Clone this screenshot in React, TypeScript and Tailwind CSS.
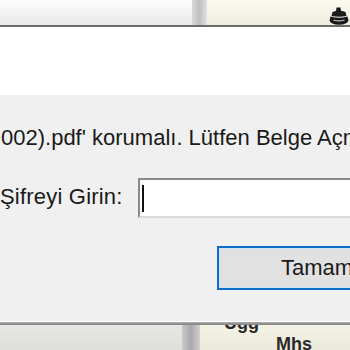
export default function App() {
  return (
    <div
      className="w-[350px] h-[350px] overflow-hidden flex flex-col bg-[#f0f0f0] text-[#1a1a1a]"
      style={{ fontFamily: '"Liberation Sans", Arial, sans-serif' }}
    >
      {/* application behind the dialog, top edge */}
      <div className="h-[25px] flex shrink-0">
        <div className="w-[192px] bg-gradient-to-b from-[#fdfdfd] to-[#e8e8e8]" />
        <div className="w-[15px] bg-gradient-to-r from-[#d8d8d8] via-[#bfbfbf] to-[#e2e2e0]" />
        <div className="flex-1 bg-gradient-to-b from-[#fbfaf1] to-[#efeddd] flex items-end justify-end pr-[1px]">
          <svg width="20" height="18" viewBox="0 0 20 18">
            <path d="M7.5 0.5 L11.5 0.5 L12 4.5 L9.5 6.5 L7 4.5 Z" fill="#151515" />
            <path d="M3.5 5 Q10 2.5 16.5 5 L17.5 9 Q10 10.5 2.5 9 Z" fill="#1b1b1b" />
            <path d="M1.5 9.5 Q10 12 18.5 9.5 L19.5 13.5 Q18.5 17.5 10 17.8 Q1.5 17.5 0.5 13.5 Z" fill="#181818" />
            <path d="M4.5 13 Q10 14.8 15.5 13" stroke="#c4c4c4" strokeWidth="1.2" fill="none" />
          </svg>
        </div>
      </div>

      {/* dialog */}
      <div className="h-[2px] shrink-0 bg-[#6a6a6a]" />
      <div className="h-[68px] shrink-0 bg-white" />
      <div className="flex-1 flex flex-col bg-[#f0f0f0] text-[22px] leading-[24px] whitespace-nowrap">
        <div className="mt-[31px] ml-[1px]">
          002).pdf' korumalı. Lütfen Belge Açma Parolasını girin.
        </div>

        <div className="mt-[28px] flex items-center h-[40px]">
          <span className="w-[138px] shrink-0 pb-[2px] tracking-[0.2px]">Şifreyi Girin:</span>
          <div className="h-[40px] w-[260px] shrink-0 bg-white border-2 border-t-[#8a8a8a] border-l-[#8a8a8a] border-r-[#dcdcdc] border-b-[#dcdcdc] flex items-center pl-[2px]">
            <div className="w-[2px] h-[27px] bg-[#111]" />
          </div>
        </div>

        <div className="mt-[28px] ml-[217px] w-[200px] h-[44px] shrink-0 border-2 border-[#0a6fc4] bg-[#e1e1e1]">
          <div className="w-full h-full border border-[#cde3f5] flex items-center justify-center pb-[1px]">
            Tamam
          </div>
        </div>
      </div>
      <div className="h-[1px] shrink-0 bg-white" />
      <div className="h-[3px] shrink-0 bg-gradient-to-b from-[#b0b0b0] to-[#7d7d7d]" />

      {/* application behind, bottom edge */}
      <div className="h-[25px] shrink-0 flex">
        <div className="w-[182px] bg-gradient-to-b from-[#e6e6e4] to-[#dededc]" />
        <div className="w-[18px] bg-gradient-to-r from-[#c9c9cc] via-[#a9a9ae] to-[#d2d2cf]" />
        <div className="flex-1 bg-gradient-to-b from-[#f3f2e6] to-[#eceadb] overflow-hidden text-[#2a2a2a] text-[18px] leading-[18px] font-bold">
          <div className="-mt-[11px] ml-[24px]">Ugg</div>
          <div className="mt-[3px] ml-[76px]">Mhs</div>
        </div>
      </div>
    </div>
  );
}
